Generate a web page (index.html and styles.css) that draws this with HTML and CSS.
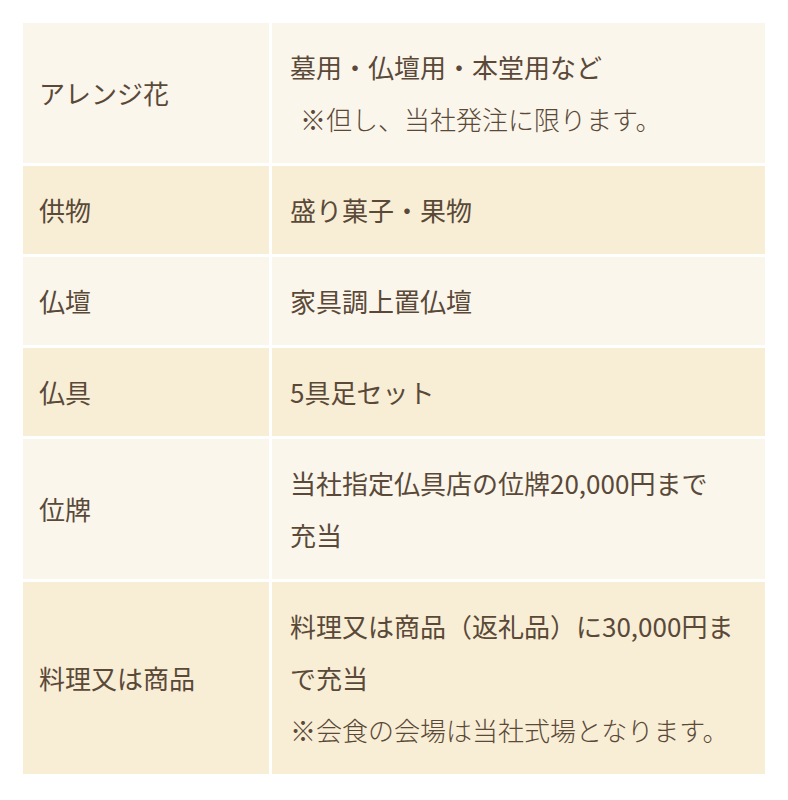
FILE: index.html
```html
<!DOCTYPE html>
<html lang="ja">
<head>
<meta charset="utf-8">
<link rel="stylesheet" href="styles.css">
</head>
<body>
<div class="wrap">
<table class="plan">
<tr class="light"><th>アレンジ花</th><td>墓用・仏壇用・本堂用など<br><span class="note indent">※但し、当社発注に限ります。</span></td></tr>
<tr class="dark"><th>供物</th><td>盛り菓子・果物</td></tr>
<tr class="light"><th>仏壇</th><td>家具調上置仏壇</td></tr>
<tr class="dark"><th>仏具</th><td>5具足セット</td></tr>
<tr class="light"><th>位牌</th><td>当社指定仏具店の位牌20,000円まで<br>充当</td></tr>
<tr class="dark"><th>料理又は商品</th><td>料理又は商品（返礼品）に30,000円ま<br>で充当<br><span class="note">※会食の会場は当社式場となります。</span></td></tr>
</table>
</div>
</body>
</html>
```
FILE: styles.css
```css
html, body {
  margin: 0;
  padding: 0;
  background: #ffffff;
}
body {
  font-family: "Noto Sans CJK JP", "Noto Sans", sans-serif;
  color: #5a4938;
}
.wrap {
  padding: 20px 20px 20px 20px;
}
.plan {
  width: 100%;
  border-collapse: collapse;
  font-size: 26px;
  line-height: 52px;
}
.plan th, .plan td {
  border: 3px solid #ffffff;
  padding: 17.5px 18px 18.5px 16px;
  text-align: left;
  font-weight: 400;
  vertical-align: middle;
}
.plan th {
  width: 212px;
}
.plan td {
  padding-left: 18px;
}
.light th, .light td {
  background: #fbf6eb;
}
.dark th, .dark td {
  background: #f8eed6;
}
.note {
  font-weight: 300;
}
.indent {
  padding-left: 10px;
}
```
